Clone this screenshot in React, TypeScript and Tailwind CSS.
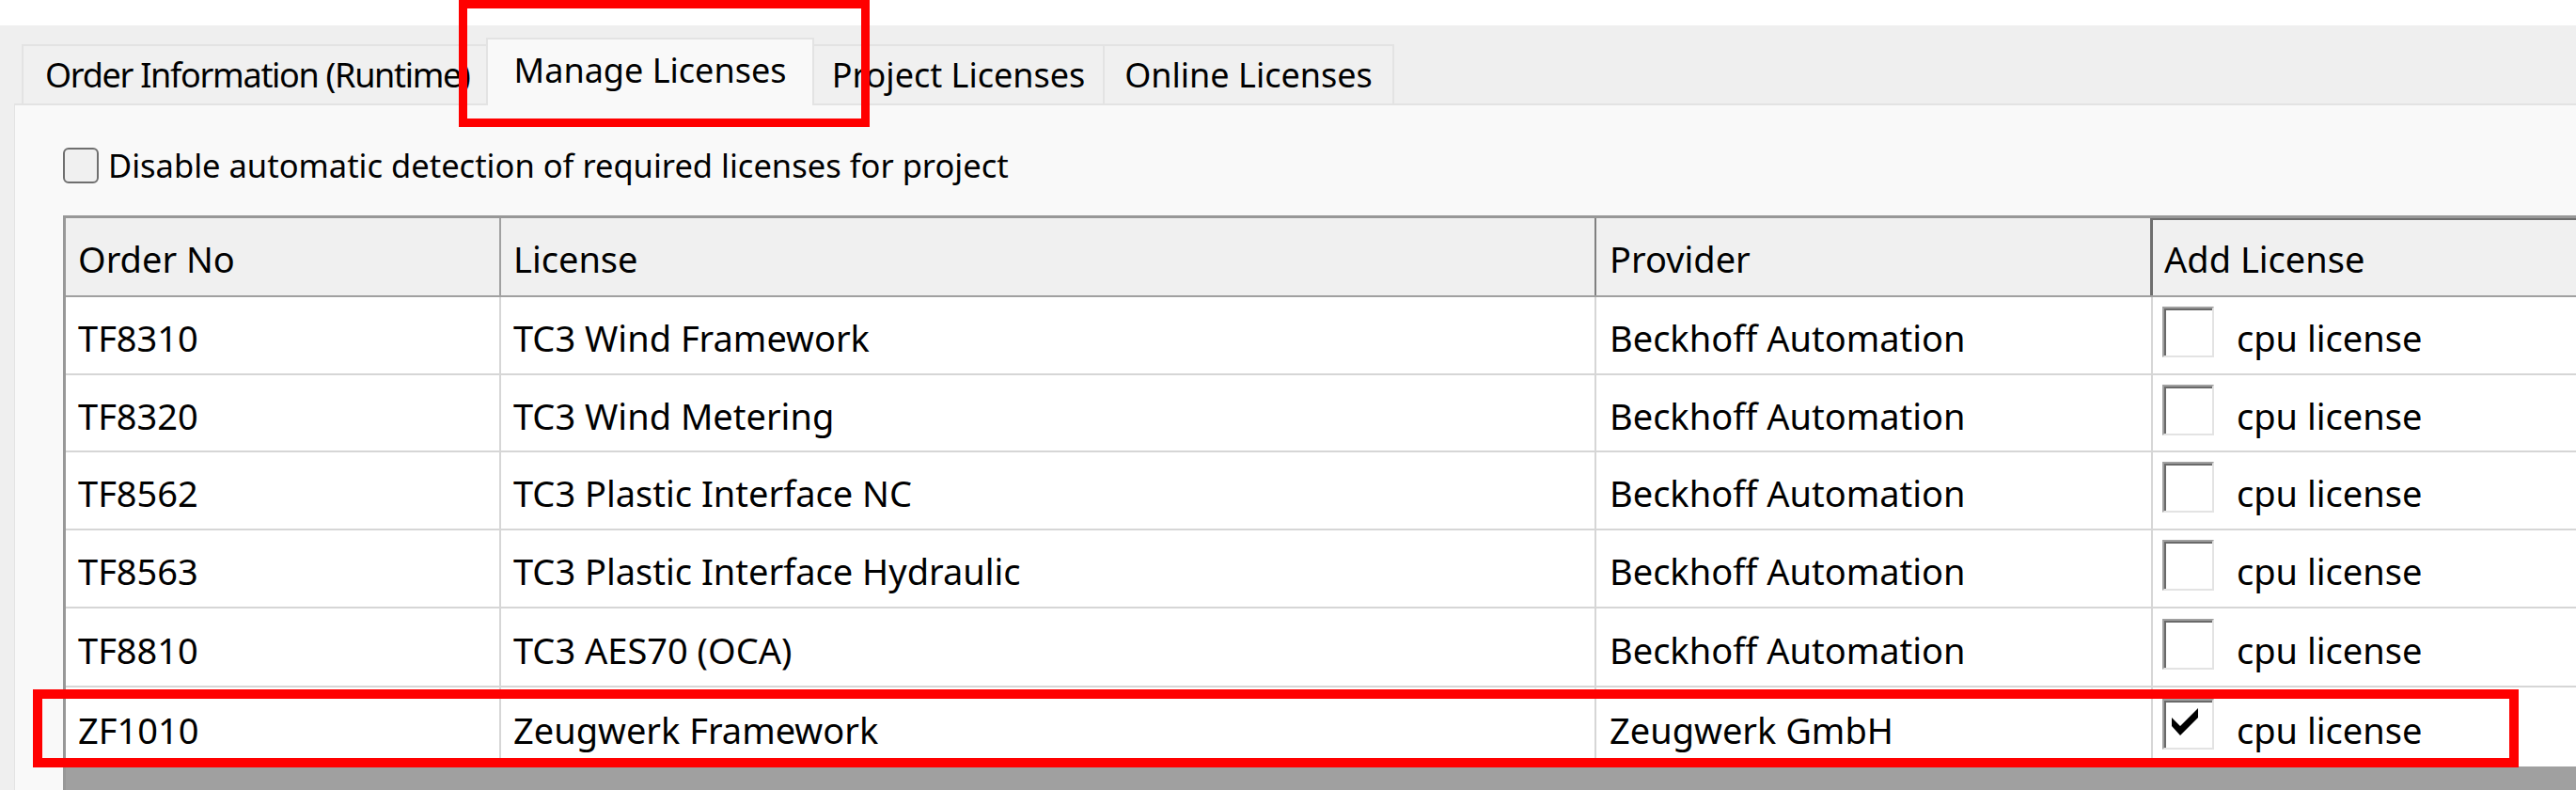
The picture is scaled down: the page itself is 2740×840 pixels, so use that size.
import React from "react";

type Row = [string, string, string, boolean];

const rows: Row[] = [
  ["TF8310", "TC3 Wind Framework", "Beckhoff Automation", false],
  ["TF8320", "TC3 Wind Metering", "Beckhoff Automation", false],
  ["TF8562", "TC3 Plastic Interface NC", "Beckhoff Automation", false],
  ["TF8563", "TC3 Plastic Interface Hydraulic", "Beckhoff Automation", false],
  ["TF8810", "TC3 AES70 (OCA)", "Beckhoff Automation", false],
  ["ZF1010", "Zeugwerk Framework", "Zeugwerk GmbH", true],
];

const rowHeights = ["h-[83px]", "h-[82px]", "h-[83px]", "h-[83px]", "h-[84px]", "h-[84px]"];

function CellCheck({ checked }: { checked: boolean }) {
  return (
    <div className="w-[55px] h-[54px] shrink-0 mb-[7px] bg-white border-2 border-[#a0a0a0] border-r-[#e3e3e3] border-b-[#e3e3e3]">
      <div className="w-full h-full border-t-2 border-l-2 border-[#696969]">
        {checked && (
          <svg width="49" height="48" viewBox="0 0 49 48">
            <polygon points="6,16 15,25 34,6 34,16 15,35 6,25" fill="#000" />
          </svg>
        )}
      </div>
    </div>
  );
}

export default function App() {
  return (
    <div className="relative w-[2740px] h-[840px] overflow-hidden bg-white text-black font-['Noto_Sans',sans-serif]">
      <div className="h-[27px] bg-white" />
      <div className="h-[813px] bg-[#efefef] flex flex-col">
        {/* Tabs */}
        <div className="h-[83px] flex items-end pl-[23px] shrink-0">
          <div className="w-[494px] h-[63px] flex items-center pl-[23px] whitespace-nowrap overflow-hidden bg-[#f0f0f0] border-t-2 border-l-2 border-[#e3e3e3] text-[36px] tracking-[-1.3px]">
            Order Information (Runtime)
          </div>
          <div className="relative z-10 w-[349px] h-[72px] -mb-[2px] flex items-center justify-center pb-[5px] whitespace-nowrap bg-[#f9f9f9] border-t-2 border-l-2 border-r-2 border-[#e3e3e3] text-[36px]">
            Manage Licenses
          </div>
          <div className="w-[309px] h-[63px] flex items-center justify-center whitespace-nowrap bg-[#f0f0f0] border-t-2 border-r-2 border-[#e3e3e3] text-[36px]">
            Project Licenses
          </div>
          <div className="w-[308px] h-[63px] flex items-center justify-center whitespace-nowrap bg-[#f0f0f0] border-t-2 border-r-2 border-[#e3e3e3] text-[36px]">
            Online Licenses
          </div>
        </div>

        {/* Panel */}
        <div className="ml-[15px] flex-1 flex flex-col bg-[#f9f9f9] border-t-2 border-l border-[#e3e3e3]">
          <div className="pt-[45px] pb-[34px] pl-[51px] shrink-0">
            <div className="h-[38px] flex items-center gap-[10px]">
              <div className="w-[38px] h-[38px] rounded-[6px] border-2 border-[#6f6f6f] bg-[#f0f0f0] shrink-0" />
              <span className="text-[34.5px] whitespace-nowrap">
                Disable automatic detection of required licenses for project
              </span>
            </div>
          </div>

          {/* Table */}
          <div className="ml-[51px] flex-1 flex flex-col bg-[#a0a0a0] border-t-[3px] border-l-[3px] border-[#989898]">
            <div className="grid grid-cols-[463px_1165px_592px_1fr] h-[84px] bg-[#f0f0f0] border-b-2 border-[#a0a0a0] text-[38px] shrink-0">
              <div className="flex items-center pl-[13px] pt-[4px] border-r-2 border-[#a0a0a0]">Order No</div>
              <div className="flex items-center pl-[13px] pt-[4px] border-r-2 border-[#808080]">License</div>
              <div className="flex items-center pl-[14px] pt-[4px] border-r-[3px] border-[#6e6e6e]">Provider</div>
              <div className="flex items-center pl-[12px] pt-[4px] shadow-[inset_0_2px_0_#6e6e6e]">Add License</div>
            </div>
            {rows.map((r, i) => (
              <div
                key={r[0]}
                className={`grid grid-cols-[463px_1165px_592px_1fr] bg-white text-[38px] shrink-0 ${rowHeights[i]} ${
                  i < rows.length - 1 ? "border-b-2 border-[#d6d6d6]" : ""
                }`}
              >
                <div className="flex items-center pl-[13px] pt-[6px] border-r-2 border-[#d6d6d6] whitespace-nowrap">{r[0]}</div>
                <div className="flex items-center pl-[13px] pt-[6px] border-r-2 border-[#d6d6d6] whitespace-nowrap">{r[1]}</div>
                <div className="flex items-center pl-[14px] pt-[6px] border-r-2 border-[#d6d6d6] whitespace-nowrap">{r[2]}</div>
                <div className="flex items-center pl-[10px] gap-[24px] whitespace-nowrap">
                  <CellCheck checked={r[3]} />
                  <span className="pt-[6px]">cpu license</span>
                </div>
              </div>
            ))}
          </div>
        </div>
      </div>

      {/* Red highlight annotations */}
      <div className="absolute left-[488px] top-0 w-[437px] h-[135px] border-[9px] border-[#ff0000] z-20" />
      <div className="absolute left-[35px] top-[733px] w-[2644px] h-[83px] border-[10px] border-[#ff0000] z-20" />
    </div>
  );
}
